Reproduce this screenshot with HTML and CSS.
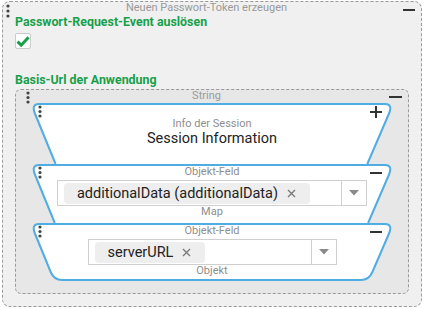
FILE: index.html
```html
<!DOCTYPE html>
<html>
<head>
<meta charset="utf-8">
<link rel="stylesheet" href="styles.css">
</head>
<body>
<div class="panel outer">
  <div class="phead ohead">
    <svg class="dots" viewBox="0 0 4 14"><circle cx="2" cy="2" r="1.6"/><circle cx="2" cy="7" r="1.6"/><circle cx="2" cy="12" r="1.6"/></svg>
    <span class="ptitle">Neuen Passwort-Token erzeugen</span>
    <span class="minus"></span>
  </div>
  <div class="obody">
    <div class="glabel">Passwort-Request-Event auslösen</div>
    <div class="check">
      <svg width="14" height="14" viewBox="0 0 14 14"><path d="M1.5 7.6 L5.2 11.2 L12.6 3.2" fill="none" stroke="#17a04b" stroke-width="3"/></svg>
    </div>
    <div class="glabel l2">Basis-Url der Anwendung</div>
    <div class="panel inner">
      <div class="phead ihead">
        <svg class="dots" viewBox="0 0 4 14"><circle cx="2" cy="2" r="1.6"/><circle cx="2" cy="6.5" r="1.6"/><circle cx="2" cy="11" r="1.6"/></svg>
        <span class="ptitle">String</span>
        <span class="minus"></span>
      </div>
      <div class="blocks">
        <div class="block b1">
          <svg class="shape" width="360" height="61"><path d="M335.3 61 L356.8 11 Q361.1 1 353 1 L7 1 Q-1 1 3.1 11 L23.6 61"/></svg>
          <svg class="bdots" viewBox="0 0 4 14"><circle cx="2" cy="2" r="1.6"/><circle cx="2" cy="6.5" r="1.6"/><circle cx="2" cy="11" r="1.6"/></svg>
          <span class="bicon plus"></span>
          <div class="slabel">Info der Session</div>
          <div class="stitle">Session Information</div>
        </div>
        <div class="block b2">
          <svg class="shape" width="360" height="59"><path d="M336.1 59 L356.8 11 Q361.1 1 353 1 L7 1 Q-1 1 3.1 11 L22.8 59"/></svg>
          <svg class="bdots" viewBox="0 0 4 14"><circle cx="2" cy="2" r="1.6"/><circle cx="2" cy="6.5" r="1.6"/><circle cx="2" cy="11" r="1.6"/></svg>
          <span class="bicon bminus"></span>
          <div class="slabel">Objekt-Feld</div>
          <div class="select">
            <div class="sval">
              <span class="chip">additionalData (additionalData)<svg class="x" viewBox="0 0 9 9"><path d="M1 1 L8 8 M8 1 L1 8"/></svg></span>
            </div>
            <div class="sarrow"><svg width="10" height="6" viewBox="0 0 10 6"><path d="M0 0 H10 L5 5.5 Z"/></svg></div>
          </div>
          <div class="slabel blabel">Map</div>
        </div>
        <div class="block b3">
          <svg class="shape" width="360" height="58"><path d="M7 1 L353 1 Q361.1 1 356.8 11 L340.4 49 Q337 57 329 57 L30 57 Q22 57 18.7 49 L3.1 11 Q-1 1 7 1 Z"/></svg>
          <svg class="bdots" viewBox="0 0 4 14"><circle cx="2" cy="2" r="1.6"/><circle cx="2" cy="6.5" r="1.6"/><circle cx="2" cy="11" r="1.6"/></svg>
          <span class="bicon bminus"></span>
          <div class="slabel">Objekt-Feld</div>
          <div class="select wide">
            <div class="sval">
              <span class="chip">serverURL<svg class="x" viewBox="0 0 9 9"><path d="M1 1 L8 8 M8 1 L1 8"/></svg></span>
            </div>
            <div class="sarrow"><svg width="10" height="6" viewBox="0 0 10 6"><path d="M0 0 H10 L5 5.5 Z"/></svg></div>
          </div>
          <div class="slabel blabel">Objekt</div>
        </div>
      </div>
    </div>
  </div>
</div>
</body>
</html>
```

FILE: styles.css
```css
* { box-sizing: border-box; }
html, body { margin: 0; padding: 0; }
body {
  background: #ffffff;
  font-family: Roboto, "Noto Sans", "DejaVu Sans", sans-serif;
  width: 423px;
  height: 309px;
  overflow: hidden;
}
.outer {
  margin: 1px 0 0 2px;
  width: 420px;
  border: 1px dashed #9a9a9a;
  border-radius: 8px;
  background: #f0f0f0;
  padding-bottom: 12px;
}
.phead { display: flex; height: 12px; }
.dots { display: block; flex: none; width: 4px; height: 14px; fill: #444; }
.ohead .dots { margin: 2px 0 0 3px; }
.ihead .dots { margin: 1px 0 0 10px; }
.ptitle {
  flex: 1;
  text-align: center;
  font-size: 11px;
  line-height: 12px;
  color: #9a9a9a;
  white-space: nowrap;
}
.minus { flex: none; width: 12px; height: 2px; background: #333; margin: 7px 6px 0 0; }
.ihead .minus { width: 13px; margin: 6px 6px 0 6px; }
.obody { padding: 0 12px; }
.glabel {
  font-weight: 700;
  font-size: 12.4px;
  line-height: 15px;
  color: #17a04b;
  white-space: nowrap;
}
.check {
  margin-top: 4px;
  width: 16px;
  height: 16px;
  background: #fff;
  border: 1px solid #cbcbcb;
  border-radius: 2px;
}
.check svg { display: block; }
.l2 { margin-top: 23px; }
.inner {
  margin-top: 2px;
  border: 1px dashed #9a9a9a;
  border-radius: 6px;
  background: #e7e7e7;
  padding-bottom: 12px;
}
.blocks { margin-top: 1px; padding: 0 16px; display: flex; flex-direction: column; }
.block {
  position: relative;
  z-index: 0;
  display: flex;
  flex-direction: column;
  align-items: center;
}
.shape {
  position: absolute;
  left: 0;
  top: 0;
  z-index: -1;
  overflow: visible;
}
.shape path { fill: #fff; stroke: #4fade4; stroke-width: 2; }
.bdots { position: absolute; left: 6px; top: 2px; width: 4px; height: 14px; fill: #444; }
.bicon { position: absolute; left: 338px; width: 12px; height: 12px; }
.bicon::before, .bicon::after { content: ""; position: absolute; background: #333; }
.bicon::before { left: 0; top: 5px; width: 12px; height: 2px; }
.plus { top: 3px; }
.plus::after { left: 5px; top: 0; width: 2px; height: 12px; }
.bminus { top: 3px; }
.b1 { height: 61px; padding-top: 15px; }
.b2 { height: 59px; padding-top: 2px; }
.b3 { height: 58px; padding-top: 2px; }
.slabel { font-size: 11px; line-height: 12px; color: #8e8e8e; white-space: nowrap; }
.blabel { line-height: 11px; }
.stitle { font-size: 14.5px; line-height: 17px; color: #222; white-space: nowrap; }
.select {
  margin-top: 2px;
  display: flex;
  height: 26px;
  border: 1px solid #cfcfcf;
  background: #fff;
}
.select.wide { min-width: 249px; }
.sval { flex: 1; display: flex; align-items: center; padding: 0 31px 0 6px; }
.chip {
  display: flex;
  align-items: center;
  gap: 9px;
  height: 21px;
  padding: 0 14px 0 13px;
  background: #eeeeee;
  border-radius: 4px;
  font-size: 14.5px;
  color: #222;
  white-space: nowrap;
}
.x { width: 9px; height: 9px; flex: none; }
.x path { stroke: #7a7a7a; stroke-width: 1.4; fill: none; }
.sarrow {
  flex: none;
  width: 25px;
  border-left: 1px solid #cfcfcf;
  display: flex;
  align-items: center;
  justify-content: center;
}
.sarrow svg { display: block; fill: #8a8a8a; }
```
